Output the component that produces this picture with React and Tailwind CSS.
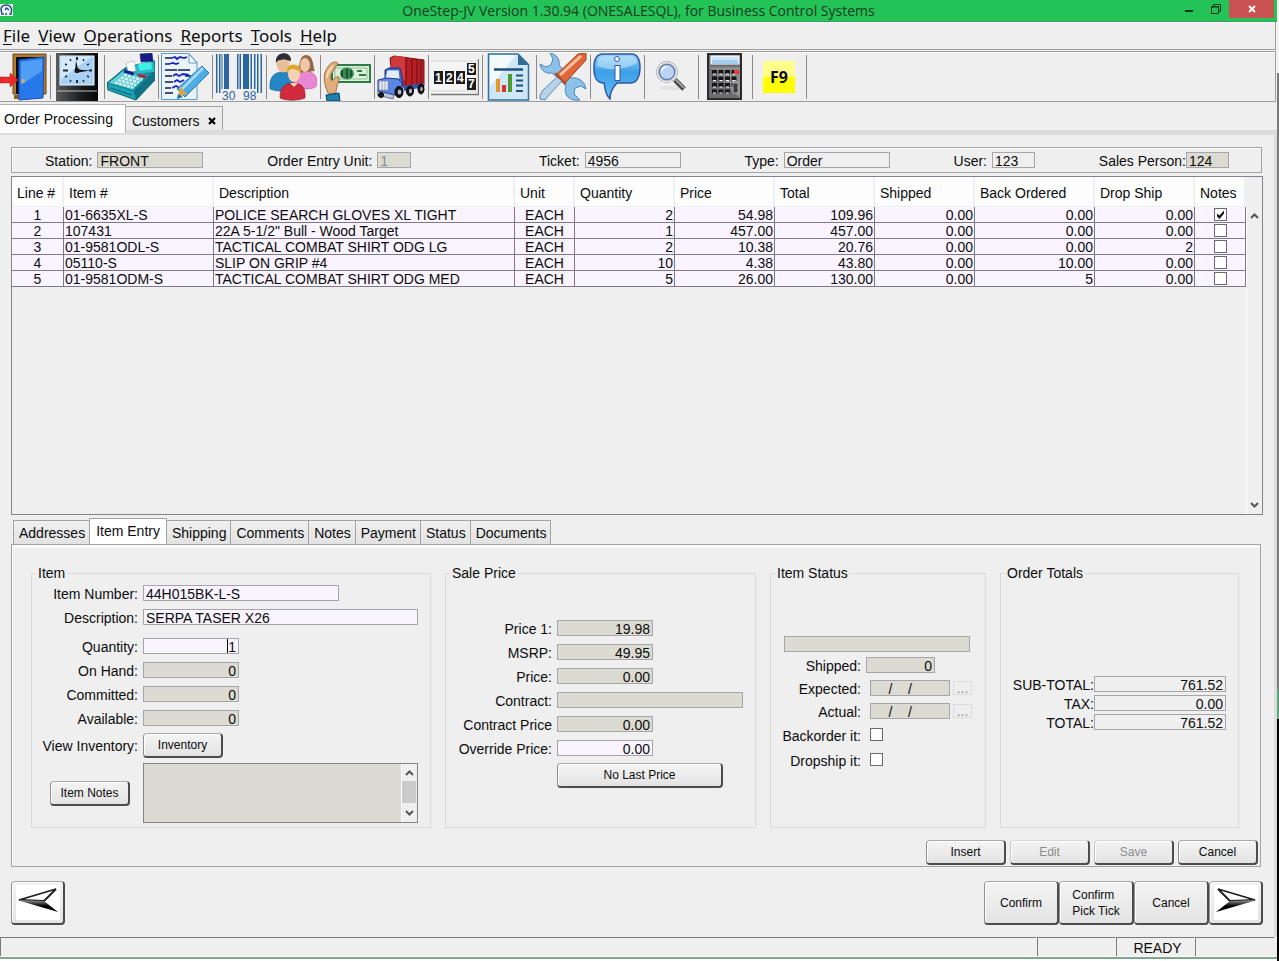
import { useState } from "react";
import { clsx } from "clsx";

const DoorIcon = () => (
  <svg viewBox="0 0 48 48" className="h-12 w-12">
    <path d="M13 1h33v40H13z" fill="#b07c31" stroke="#6b4512" />
    <path d="M16 4h27v37H16z" fill="#0b0b12" />
    <path d="M14 42h6v4h-6z" fill="#8a5d20" />
    <path d="M19 7l25-3-1 41-24 2z" fill="#2878ea" stroke="#1550b8" />
    <path d="M21 9l21-3v12L21 32z" fill="#6bb6fb" opacity=".6" />
    <circle cx="23" cy="28" r="2" fill="#c9b26a" />
    <path d="M0 24h10v-4l8 7-8 7v-4H0z" fill="#ea2b2b" stroke="#b31515" strokeWidth=".5" />
  </svg>
);

const ClockIcon = () => (
  <svg viewBox="0 0 48 48" className="h-12 w-12">
    <defs>
      <linearGradient id="clock-case" x1="0" y1="0" x2="1" y2="0">
        <stop offset="0" stopColor="#5a5b5d" />
        <stop offset=".6" stopColor="#1b1c1d" />
        <stop offset="1" stopColor="#050505" />
      </linearGradient>
    </defs>
    <path d="M3 0h42v48H3z" fill="url(#clock-case)" />
    <path d="M4 38h40" stroke="#b9bcc0" />
    <rect x="7" y="3" width="34" height="29" fill="#a9d1f3" stroke="#eef6fc" />
    <path d="M8 4h30L8 26z" fill="#dff0fc" opacity=".8" />
    <g stroke="#1e2a36" strokeWidth="2">
      <path d="M24 4v3M24 27v3M10 17.500h5M36 17.500h3" />
      <path d="M17 6l1 2M31 6l-1 2M12 11l2 1M36 11l-2 1M12 24l2-1M36 24l-2-1M17 29l1-2M31 29l-1-2" strokeWidth="1.500" />
    </g>
    <path d="M23 7l2 9.500 12 1-12 2h-3z" fill="#111" />
    <circle cx="24" cy="17.500" r="2.500" fill="#111" />
  </svg>
);

const RegisterIcon = () => (
  <svg viewBox="0 0 48 48" className="h-12 w-12">
    <path d="M0 30l18-15 30-7v19L29 47 1 37z" fill="#1595a6" stroke="#0b5f6e" />
    <path d="M1 30l17-14 23 6-15 15z" fill="#62cfd9" stroke="#0e7483" strokeWidth=".7" />
    <path d="M1 31l25 8 3 7-27-9z" fill="#1ba6b7" />
    <path d="M27 38l20-20v10L29 46z" fill="#0f7181" />
    <path d="M28 12l19-4 1 11-19 3z" fill="#2cb8c8" stroke="#0b6a79" strokeWidth=".6" />
    <path d="M31 11l13-2 1 7-12 2z" fill="#3ef0e6" />
    <path d="M33 1l12-1 1 8-12 1z" fill="#151a8c" stroke="#0b0d4d" strokeWidth=".5" />
    <path d="M19 10l8-2 2 10-8 1z" fill="#fff" stroke="#9ab" strokeWidth=".6" />
    <path d="M17 18l10 3" stroke="#17208f" strokeWidth="3" />
    <g stroke="#e3f2ee" strokeWidth="2.200" strokeDasharray="3 1.200">
      <path d="M17 22l18 5M14 24.500l18 5M11 27l18 5M8 29.500l18 5" />
    </g>
    <path d="M31 22l8 2" stroke="#9d2b3d" strokeWidth="3" />
    <path d="M3 35l22 7" stroke="#0a5b69" />
  </svg>
);

const NoteIcon = () => (
  <svg viewBox="0 0 48 48" className="h-12 w-12">
    <path d="M.5.5H28l8 9v37H.500z" fill="#e9f4fd" stroke="#5c9ccb" />
    <path d="M28 1v9h8z" fill="#fff" stroke="#5c9ccb" />
    <g stroke="#111c3c" strokeWidth="1.500">
      <path d="M4 5h7M4 11h4M4 17h12M17 17h12M4 23h7M24 23h6M4 29h8M4 35h6M4 40h8" />
    </g>
    <g stroke="#1720c4" strokeWidth="1.800" fill="none">
      <path d="M11 5l3-1 2 2 3-2 4 1 3-1M8 11l4-1 3 1 3-1M12 23l3-2 3 2 4-2 6 1M13 29l3-2 3 2 4-2M11 35l4-2 4 2 5-1" />
    </g>
    <path d="M41 13l7 7-24 24-8-8z" fill="#4fade6" stroke="#2679b4" />
    <path d="M42 15L19 38" stroke="#a9dbf8" strokeWidth="2.500" />
    <path d="M19 33l7 8-9 3z" fill="#d6a34a" />
    <path d="M17 41l-1 5 6-2z" fill="#1e6fb0" />
  </svg>
);

const BarcodeIcon = () => (
  <svg viewBox="0 0 48 48" className="h-12 w-12 overflow-visible">
    <g fill="#2b66a3">
      <path d="M1 1h1.500v39H1zM4 1h1.500v39H4zM9 1h5v35H9zM6.500 1h1v35h-1z" />
      <path d="M22 1h1.500v35H22zM24.500 1H26v35h-1.500zM28 1h6v35h-6zM35.500 1H37v35h-1.500zM39 1h1.500v35H39zM42 1h1.500v39H42zM45.500 1H47v39h-1.500z" />
    </g>
    <text x="7" y="47" fontSize="12" fill="#2b66a3" fontFamily="Liberation Sans">30</text>
    <text x="28" y="47" fontSize="12" fill="#2b66a3" fontFamily="Liberation Sans">98</text>
  </svg>
);

const PeopleIcon = () => (
  <svg viewBox="0 0 48 48" className="h-12 w-12">
    <path d="M1 36c-1-12 4-17 13-17s13 5 13 17c-8 3-18 3-26 0z" fill="#2287c4" stroke="#155d9b" strokeWidth=".6" />
    <path d="M24 34c0-12 5-16 12-16 8 0 13 5 12 14-2 4-8 4-14 4z" fill="#e987d2" stroke="#b5508f" strokeWidth=".6" />
    <path d="M28 20c3-3 1-18 9-18s7 13 9 16z" fill="#96664a" />
    <ellipse cx="36" cy="12" rx="5" ry="7" fill="#f0c7a4" />
    <ellipse cx="14" cy="11" rx="6.500" ry="8.500" fill="#e9bd98" />
    <path d="M7 10c-2-12 16-13 15-2-4-1-8-2-10-1-3 0-4 1-5 3z" fill="#2c2f35" />
    <path d="M11 45c0-12 6-15 13-15s13 3 12 15c-8 3-18 3-25 0z" fill="#d02a3c" stroke="#8f1523" strokeWidth=".6" />
    <ellipse cx="25" cy="21" rx="6" ry="8" fill="#f4d2b4" />
    <path d="M18 21c-3-12 15-13 14-1-3-3-6-4-9-4-2 0-4 2-5 5z" fill="#e2a52c" />
    <path d="M21 30l4 4 4-4" fill="#f4d2b4" />
  </svg>
);

const CashIcon = () => (
  <svg viewBox="0 0 48 48" className="h-12 w-12">
    <rect x="9" y="12" width="38" height="17" fill="#dcefd9" stroke="#2d7d46" strokeWidth="2" />
    <path d="M12 15h32v11H12z" fill="none" stroke="#7fb58a" strokeWidth=".8" />
    <ellipse cx="24" cy="20.500" rx="7" ry="6" fill="#3b8750" />
    <path d="M24 16v9M19 17v7M28 17v7" stroke="#16482a" strokeWidth="1.500" />
    <path d="M34 18h5M36 22h7" stroke="#2d7d46" strokeWidth="2" />
    <path
      d="M5 40C0 29 0 20 5 14c2-4 5-5 8-5 3 1 2 3 0 4l-5 9c-1 5 0 7 3 4s6-3 5 0c-1 6-3 8-3 15z"
      fill="#dfae7b"
      stroke="#8a5a2c"
      strokeWidth=".8"
    />
    <path d="M4 25c0-5 3-9 6-12" stroke="#f7d9b2" strokeWidth="2" fill="none" />
    <path d="M3 42l13-2 1 8H4z" fill="#1d7fae" stroke="#0c4468" />
  </svg>
);

const TruckIcon = () => (
  <svg viewBox="0 0 48 48" className="h-12 w-12">
    <path d="M13 5l4-2 30 4v26l-18 3-14-12z" fill="#b71f25" stroke="#7a1014" />
    <path d="M14 5l4-2 11 1v24l-15-5z" fill="#d03a3d" />
    <path d="M29 4v30M35 5v29M40 6v28M44 7v26" stroke="#84131a" strokeWidth="1.500" />
    <path d="M8 17l4-2h11l3 15-2 6H8z" fill="#3f6bd0" stroke="#1c2f86" />
    <path d="M10 17h12l1 9H8z" fill="#dfeefb" stroke="#2b469f" strokeWidth=".6" />
    <path d="M1 27l8-2 12 1 4 4v8l-7 4-17-4z" fill="#5b86e2" stroke="#203a99" />
    <path d="M2 28h9v9H2z" fill="#e4e9f2" stroke="#8790a8" strokeWidth=".7" />
    <path d="M5 28v9M8 28v9" stroke="#8790a8" strokeWidth=".7" />
    <path d="M0 38l17 4-1 4-16-4z" fill="#bcc7dc" stroke="#3d4c78" strokeWidth=".7" />
    <path d="M26 33l21-3v4l-20 4z" fill="#3456a8" />
    <g fill="#17181c" stroke="#000">
      <ellipse cx="22" cy="39" rx="4" ry="5.500" />
      <ellipse cx="33" cy="38" rx="3.500" ry="5" />
      <ellipse cx="44" cy="36" rx="3" ry="5" />
      <ellipse cx="4" cy="42" rx="2.500" ry="2.500" />
    </g>
    <g fill="#b9bfcc">
      <ellipse cx="22.500" cy="39" rx="1.800" ry="2.500" />
      <ellipse cx="33.500" cy="38" rx="1.500" ry="2.200" />
      <ellipse cx="44.500" cy="36" rx="1.200" ry="2" />
    </g>
  </svg>
);

const CounterIcon = () => (
  <svg viewBox="0 0 48 48" className="h-12 w-12">
    <rect x="0" y="6" width="48" height="36" fill="#f4f4f4" />
    <path d="M0 41.500h47.500V6" fill="none" stroke="#7a7a7a" strokeWidth="1.500" />
    <path d="M0 38h46M0 8h47" fill="none" stroke="#d2d2d2" />
    <g fill="#1c1c1c">
      <rect x="3" y="18" width="9" height="13" />
      <rect x="14" y="18" width="9" height="13" />
      <rect x="25" y="18" width="9" height="13" />
      <rect x="36" y="10" width="9" height="12" />
      <rect x="36" y="25" width="9" height="12" />
    </g>
    <g fill="#fff" fontSize="12" fontWeight="bold" fontFamily="Liberation Sans">
      <text x="4" y="29">1</text>
      <text x="15" y="29">2</text>
      <text x="26" y="29">4</text>
      <text x="37" y="20">5</text>
      <text x="37" y="35">7</text>
    </g>
  </svg>
);

const ReportIcon = () => (
  <svg viewBox="0 0 48 48" className="h-12 w-12">
    <path d="M3.500 1H33l10.500 10.500V47h-40z" fill="#cfe6f7" stroke="#33709c" strokeWidth="1.500" />
    <path d="M5 2h26L5 34z" fill="#f3fafe" />
    <path d="M33 1v11h10.500z" fill="#2f6c96" />
    <path d="M9 16.500h29" stroke="#1e5077" strokeWidth="2.500" />
    <rect x="11" y="26" width="4" height="13" fill="#e3962b" />
    <rect x="17" y="32" width="4" height="7" fill="#dc3030" />
    <rect x="23" y="21" width="4" height="18" fill="#4b9a2b" />
    <path d="M31 22.500h7M31 27.500h7M31 32.500h7M31 38h7" stroke="#1e5077" strokeWidth="2" />
  </svg>
);

const ToolsIcon = () => (
  <svg viewBox="0 0 48 48" className="h-12 w-12">
    <path
      d="M11 0c6 1 10 6 9 12l12 13c8-1 14 4 15 11l-5-3-6 2-1 6 6 6c-6 1-12-1-14-6-1-3-1-6 0-8L13 20c-6 1-11-2-12-9l6 3 5-2 2-6z"
      fill="#8cc1ea"
      stroke="#4a87b9"
    />
    <path d="M1 42l3-5 14-13 5 4L10 42l-4 5-5-1z" fill="#b5d2e9" stroke="#5f8cb2" />
    <path d="M17 22L39 1l8-1v7L26 30z" fill="#e0673a" stroke="#a33c18" />
    <path d="M21 22L42 3" stroke="#f9c1a2" strokeWidth="3" />
    <path d="M16 20l11 11" stroke="#b4481f" strokeWidth="2" />
  </svg>
);

const InfoIcon = () => (
  <svg viewBox="0 0 48 48" className="h-12 w-12">
    <defs>
      <linearGradient id="bubble" x1="0" y1="0" x2="0" y2="1">
        <stop offset="0" stopColor="#9ad5f8" />
        <stop offset=".4" stopColor="#3c9fe6" />
        <stop offset="1" stopColor="#63bff2" />
      </linearGradient>
    </defs>
    <path
      d="M10 1h28c7 0 9 6 9 14s-3 15-9 15H24c-3 3-7 9-7 16-4-3-5-9-6-16C3 30 1 24 1 15 1 7 3 1 10 1z"
      fill="url(#bubble)"
      stroke="#2c56a8"
      strokeWidth="1.500"
    />
    <path d="M4 13C4 6 7 3 12 3h24c5 0 8 3 8 7-13 7-27 8-40 3z" fill="#c8eafc" opacity=".55" />
    <circle cx="24" cy="6" r="2.500" fill="#fff" stroke="#3652a4" />
    <rect x="22" y="12.500" width="5" height="15" fill="#fff" stroke="#3652a4" />
  </svg>
);

const SearchIcon = () => (
  <svg viewBox="0 0 48 48" className="h-12 w-12">
    <ellipse cx="24" cy="35" rx="12" ry="2" fill="#e2e2e2" />
    <path d="M28 27l9 9" stroke="#4b4b4b" strokeWidth="5" />
    <path d="M29 27l8 8" stroke="#bdbdbd" strokeWidth="1.500" />
    <circle cx="20" cy="19" r="9" fill="#cfe0f6" stroke="#8f949c" strokeWidth="3.500" />
    <circle cx="20" cy="19" r="9.500" fill="none" stroke="#eceef2" strokeWidth="1.500" />
    <circle cx="20" cy="19" r="7.500" fill="#bcd3f3" stroke="#5277bd" />
    <path d="M14 19c0-5 5-7 8-5-4 0-6 2-8 5z" fill="#fff" />
  </svg>
);

const CalculatorIcon = () => (
  <svg viewBox="0 0 48 48" className="h-12 w-12">
    <rect x="7" y="1" width="33" height="45" fill="#6d6d70" stroke="#2c2c2e" strokeWidth="2" />
    <path d="M8 14h31v31z" fill="#8d8d90" />
    <rect x="10" y="3" width="28" height="8" fill="#cfe6fa" stroke="#fff" />
    <path d="M11 7h26v4H11z" fill="#a5cdee" />
    <g stroke="#151516" strokeWidth="4" strokeDasharray="5 1.500">
      <path d="M11 19h25M11 25.500h25M11 32h25M11 38.500h19" />
    </g>
    <g stroke="#fff" strokeWidth="1" strokeDasharray="3 3.500">
      <path d="M12 21h23M12 27.500h23M12 34h23M12 40h18" />
    </g>
    <rect x="33" y="17" width="5" height="4" fill="#e23b3b" />
    <rect x="32" y="30" width="5" height="10" fill="#3a3a3d" stroke="#cfcfcf" strokeWidth=".7" />
  </svg>
);

const F9Icon = () => (
  <span className="ml-2 flex h-8 w-8 items-center justify-center bg-linear-to-b from-[#ffff8a] from-50% to-[#ffff00] to-50% font-['Noto_Sans',sans-serif] text-base font-bold">
    F9
  </span>
);

const tools = [
  { name: "Clock", icon: ClockIcon },
  { name: "Register", icon: RegisterIcon },
  { name: "Notes", icon: NoteIcon },
  { name: "Barcode", icon: BarcodeIcon },
  { name: "Customers", icon: PeopleIcon },
  { name: "Payments", icon: CashIcon },
  { name: "Shipping", icon: TruckIcon },
  { name: "Counter", icon: CounterIcon },
  { name: "Reports", icon: ReportIcon },
  { name: "Tools", icon: ToolsIcon },
  { name: "Info", icon: InfoIcon },
  { name: "Search", icon: SearchIcon },
  { name: "Calculator", icon: CalculatorIcon },
  { name: "F9", icon: F9Icon },
];

const menus = ["File", "View", "Operations", "Reports", "Tools", "Help"];

const columns = [
  { title: "Line #", width: "w-[52px]" },
  { title: "Item #", width: "w-[150px]" },
  { title: "Description", width: "" },
  { title: "Unit", width: "w-[60px]" },
  { title: "Quantity", width: "w-[100px]" },
  { title: "Price", width: "w-[100px]" },
  { title: "Total", width: "w-[100px]" },
  { title: "Shipped", width: "w-[100px]" },
  { title: "Back Ordered", width: "w-[120px]" },
  { title: "Drop Ship", width: "w-[100px]" },
  { title: "Notes", width: "w-[51px]" },
];

const lines = [
  ["1", "01-6635XL-S", "POLICE SEARCH GLOVES XL TIGHT", "EACH", "2", "54.98", "109.96", "0.00", "0.00", "0.00"],
  ["2", "107431", "22A 5-1/2\" Bull - Wood Target", "EACH", "1", "457.00", "457.00", "0.00", "0.00", "0.00"],
  ["3", "01-9581ODL-S", "TACTICAL COMBAT SHIRT ODG LG", "EACH", "2", "10.38", "20.76", "0.00", "0.00", "2"],
  ["4", "05110-S", "SLIP ON GRIP #4", "EACH", "10", "4.38", "43.80", "0.00", "10.00", "0.00"],
  ["5", "01-9581ODM-S", "TACTICAL COMBAT SHIRT ODG MED", "EACH", "5", "26.00", "130.00", "0.00", "5", "0.00"],
];

const cellAlign = (i) => {
  if (i === 0 || i === 3) return "text-center";
  return i > 3 ? "text-right pr-px" : "text-left pl-px";
};

const orderTabs = ["Addresses", "Item Entry", "Shipping", "Comments", "Notes", "Payment", "Status", "Documents"];

function Field({ id, tone = "locked", className, ...rest }) {
  return (
    <input
      id={id}
      type="text"
      className={clsx(
        "h-4 border border-[#a6a6aa] px-[2px] pt-[2px] text-sm leading-none outline-none",
        tone === "locked" && "bg-[#dbdbd1]",
        tone === "open" && "bg-[#f9f4ff]",
        tone === "plain" && "bg-[#efefef]",
        className
      )}
      {...rest}
    />
  );
}

function Check({ checked, onChange, ...rest }) {
  return (
    <span className="relative block h-[13px] w-[13px]">
      <input
        type="checkbox"
        checked={checked}
        onChange={onChange}
        className="block h-[13px] w-[13px] appearance-none border border-[#6a6a6a] bg-white"
        {...rest}
      />
      {checked && (
        <svg viewBox="0 0 13 13" className="pointer-events-none absolute inset-0">
          <path d="M3 5.500v3L5.500 11 10 5.500v-3L5.500 7.500z" fill="#111" />
        </svg>
      )}
    </span>
  );
}

function Button({ className, ...rest }) {
  return (
    <button
      type="button"
      className={clsx(
        "rounded border border-r-2 border-b-2 border-t-[#a9a9a9] border-r-[#4c4c4c] border-b-[#4c4c4c] border-l-[#8f8f8f] bg-linear-to-b from-[#f4f4f4] to-[#e3e3e3] text-xs leading-4 shadow-[inset_1px_1px_0_#fff] disabled:border-t-[#d6d6d6] disabled:border-l-[#c4c4c4] disabled:text-[#8c8c8c]",
        className
      )}
      {...rest}
    />
  );
}

function Row({ id, label, labelWidth, gap = "gap-[5px]", height = "h-6", children }) {
  return (
    <div className={clsx("flex items-center", height, gap)}>
      <label htmlFor={id} className={clsx("shrink-0 pt-[2px] text-right whitespace-nowrap", labelWidth)}>
        {label}
      </label>
      {children}
    </div>
  );
}

function Group({ title, className, children }) {
  return (
    <fieldset className={clsx("h-[263px] min-w-0 border border-[#dadada]", className)}>
      <legend className="ml-1 px-[2px] leading-4">{title}</legend>
      {children}
    </fieldset>
  );
}

const Chevron = ({ down }) => (
  <svg viewBox="0 0 9 7" className="h-[7px] w-[9px]">
    <path d={down ? "M1 1l3.500 3.500L8 1" : "M1 6l3.500-3.500L8 6"} fill="none" stroke="#565656" strokeWidth="2" />
  </svg>
);

function ScrollBar({ thumb, className }) {
  return (
    <div className={clsx("flex w-4 shrink-0 flex-col items-center border-l border-white bg-[#efefef]", className)}>
      <button type="button" aria-label="Scroll up" className="flex h-[17px] w-full items-center justify-center">
        <Chevron />
      </button>
      <div className="w-full flex-1">{thumb && <div className="mr-px h-[22px] bg-[#cbcbcb]" />}</div>
      <button type="button" aria-label="Scroll down" className="flex h-[17px] w-full items-center justify-center">
        <Chevron down />
      </button>
    </div>
  );
}

const Arrow = ({ flip }) => (
  <span className="flex h-[35px] w-11 justify-center bg-white pt-[2px]">
    <svg viewBox="0 0 42 26" className={clsx("h-[26px] w-[42px]", flip && "-scale-x-100")}>
      <defs>
        <linearGradient id="dart" x1="0" y1="0" x2="0" y2="1">
          <stop offset="0" stopColor="#999" />
          <stop offset=".5" stopColor="#000" />
        </linearGradient>
      </defs>
      <path d="M2 13L39 2 27 14z" fill="#fff" stroke="#1c1c1c" strokeWidth="1.800" />
      <path d="M0 13l27 1 14 11z" fill="url(#dart)" />
    </svg>
  </span>
);

function TitleBar() {
  return (
    <header className="relative flex h-[22px] items-start justify-end border-b border-[#3f9e5f] bg-[#24c357]">
      <svg viewBox="0 0 13 12" className="absolute top-1 left-0 h-3 w-[13px] bg-[#f3faff]">
        <path d="M2 9C-1 2 4 1 6.500 1S13 3 11 9M5 6l1.500-2L9 6" fill="none" stroke="#1d4f86" strokeWidth="1.500" />
        <path d="M1 10h3M9 10h3M5 10h2" stroke="#1d4f86" strokeWidth="1.500" />
      </svg>
      <h1 className="absolute inset-x-0 text-center font-['Open_Sans',sans-serif] text-sm leading-[22px] text-[#173b22]">
        OneStep-JV Version 1.30.94 (ONESALESQL), for Business Control Systems
      </h1>
      <div className="relative mr-[3px] flex">
        <button type="button" aria-label="Minimize" className="flex h-[18px] w-[26px] items-center justify-center">
          <svg viewBox="0 0 10 10" className="h-[10px] w-[10px]">
            <path d="M1 7h8" stroke="#12351d" strokeWidth="2" />
          </svg>
        </button>
        <button type="button" aria-label="Restore" className="flex h-[18px] w-[27px] items-center justify-center">
          <svg viewBox="0 0 10 10" className="h-[10px] w-[10px]" fill="none" stroke="#12351d">
            <path d="M.5 2.500h7v7h-7zM2.500 2.500v-2h7v7h-2M.5 3h7" />
          </svg>
        </button>
        <button type="button" aria-label="Close" className="flex h-[18px] w-[45px] items-center justify-center bg-[#cb5252]">
          <svg viewBox="0 0 8 8" className="h-2 w-2">
            <path d="M1 1l6 6M7 1L1 7" stroke="#fff" strokeWidth="1.800" />
          </svg>
        </button>
      </div>
    </header>
  );
}

function Toolbar() {
  return (
    <div className="mt-px mr-px flex h-[51px] items-center border border-l-0 border-[#9e9e9e] shadow-[inset_0_1px_0_#fff]">
      <button type="button" aria-label="Exit" className="flex h-11 w-[51px] items-center border-r border-[#8a8a8a]">
        <DoorIcon />
      </button>
      {tools.map(({ name, icon: Icon }) => (
        <button
          key={name}
          type="button"
          aria-label={name}
          className="flex h-11 w-[54px] shrink-0 items-center border-r border-[#8a8a8a] pl-[2px]"
        >
          <Icon />
        </button>
      ))}
    </div>
  );
}

function OrderHeader() {
  return (
    <div className="mr-px flex h-[26px] items-center justify-between border border-[#a3a3a3] pr-8 pl-[33px] shadow-[inset_1px_1px_0_#fff]">
      <Row id="station" label="Station:">
        <Field id="station" defaultValue="FRONT" className="w-[106px]" />
      </Row>
      <Row id="unit" label="Order Entry Unit:">
        <Field id="unit" defaultValue="1" className="w-[34px] text-[#8a8a8a]" />
      </Row>
      <span />
      <Row id="ticket" label="Ticket:">
        <Field id="ticket" tone="plain" defaultValue="4956" className="w-24" />
      </Row>
      <Row id="type" label="Type:">
        <Field id="type" tone="plain" defaultValue="Order" className="w-[106px]" />
      </Row>
      <Row id="user" label="User:">
        <Field id="user" tone="plain" defaultValue="123" className="w-[43px]" />
      </Row>
      <Row id="sales" label="Sales Person:" gap="gap-0">
        <Field id="sales" defaultValue="124" className="w-[43px]" />
      </Row>
    </div>
  );
}

function LinesTable() {
  const [notes, setNotes] = useState([true, false, false, false, false]);
  const toggle = (i) => setNotes(notes.map((n, j) => (j === i ? !n : n)));

  return (
    <div className="mt-[3px] flex h-[339px] border border-[#83838b]">
      <div className="min-w-0 flex-1">
        <table className="w-full table-fixed border-separate border-spacing-0">
          <thead>
            <tr className="h-[30px] bg-[#fdfdfd]">
              {columns.map((c) => (
                <th
                  key={c.title}
                  scope="col"
                  className={clsx(
                    "border-r-2 border-b border-[#eef1f4] pt-[2px] pl-[5px] text-left font-normal whitespace-nowrap",
                    c.width
                  )}
                >
                  {c.title}
                </th>
              ))}
            </tr>
          </thead>
          <tbody>
            {lines.map((line, row) => (
              <tr key={line[0]} className="h-4 bg-[#f9f4ff] leading-[13px]">
                {line.map((cell, i) => (
                  <td
                    key={i}
                    className={clsx("border-r border-b border-[#7d7a85] pt-[2px] whitespace-nowrap", cellAlign(i))}
                  >
                    {cell}
                  </td>
                ))}
                <td className="border-r border-b border-[#7d7a85]">
                  <div className="flex justify-center">
                    <Check checked={notes[row]} onChange={() => toggle(row)} aria-label={`Notes for line ${line[0]}`} />
                  </div>
                </td>
              </tr>
            ))}
          </tbody>
        </table>
      </div>
      <ScrollBar className="mt-[30px]" />
    </div>
  );
}

function ItemGroup() {
  return (
    <Group title="Item">
      <Row id="item-number" label="Item Number:" labelWidth="w-[106px]">
        <Field id="item-number" tone="open" defaultValue="44H015BK-L-S" className="w-[196px]" />
      </Row>
      <Row id="item-desc" label="Description:" labelWidth="w-[106px]">
        <Field id="item-desc" tone="open" defaultValue="SERPA TASER X26" className="w-[275px]" />
      </Row>
      <div className="mt-[5px]">
        <Row id="qty" label="Quantity:" labelWidth="w-[106px]">
          <span className="relative flex">
            <Field id="qty" tone="open" defaultValue="1" className="w-24 text-right" />
            <span className="absolute top-px right-[11px] h-[14px] w-px bg-black" />
          </span>
        </Row>
        <Row id="on-hand" label="On Hand:" labelWidth="w-[106px]">
          <Field id="on-hand" defaultValue="0" className="w-24 text-right" />
        </Row>
        <Row id="committed" label="Committed:" labelWidth="w-[106px]">
          <Field id="committed" defaultValue="0" className="w-24 text-right" />
        </Row>
        <Row id="available" label="Available:" labelWidth="w-[106px]">
          <Field id="available" defaultValue="0" className="w-24 text-right" />
        </Row>
      </div>
      <Row id="inventory" label="View Inventory:" labelWidth="w-[106px]" height="h-[30px]">
        <Button id="inventory" className="h-[25px] w-20">Inventory</Button>
      </Row>
      <div className="mt-[3px] flex items-center gap-[13px] pl-[18px]">
        <Button className="h-[25px] w-20 shrink-0">Item Notes</Button>
        <div className="flex h-[60px] w-[275px] border border-[#83838b] bg-[#dbdbd1]">
          <textarea aria-label="Item notes" className="min-w-0 flex-1 resize-none outline-none" />
          <ScrollBar thumb />
        </div>
      </div>
    </Group>
  );
}

function PriceGroup() {
  const prices = [
    { id: "price1", label: "Price 1:", value: "19.98" },
    { id: "msrp", label: "MSRP:", value: "49.95" },
    { id: "price", label: "Price:", value: "0.00" },
    { id: "contract", label: "Contract:", value: "" },
    { id: "contract-price", label: "Contract Price", value: "0.00" },
    { id: "override", label: "Override Price:", value: "0.00" },
  ];
  return (
    <Group title="Sale Price">
      <div className="pt-[35px]">
        {prices.map((p) => (
          <Row key={p.id} id={p.id} label={p.label} labelWidth="w-[106px]">
            <Field
              id={p.id}
              defaultValue={p.value}
              tone={p.id === "override" ? "open" : "locked"}
              className={clsx("text-right", p.id === "contract" ? "w-[186px]" : "w-24")}
            />
          </Row>
        ))}
      </div>
      <Button className="mt-[3px] ml-[111px] h-[25px] w-[166px]">No Last Price</Button>
    </Group>
  );
}

function StatusGroup() {
  const [flags, setFlags] = useState({ backorder: false, dropship: false });
  const dates = [
    { id: "expected", label: "Expected:" },
    { id: "actual", label: "Actual:" },
  ];
  return (
    <Group title="Item Status">
      <div className="flex pt-[55px] pl-[13px]">
        <Field aria-label="Item status" defaultValue="" className="w-[186px]" />
      </div>
      <div className="pt-[2px]">
        <Row id="shipped" label="Shipped:" labelWidth="w-[90px]" height="h-[22px]">
          <Field id="shipped" defaultValue="0" className="w-[69px] text-right" />
        </Row>
        {dates.map((d) => (
          <Row key={d.id} id={d.id} label={d.label} labelWidth="w-[90px]" gap="gap-[9px]" height="h-[23px]">
            <div className="flex items-center gap-[3px]">
              <Field id={d.id} defaultValue="    /    /" className="w-20" />
              <button
                type="button"
                disabled
                aria-label={`Pick ${d.label}`}
                className="flex h-[14px] w-[19px] items-center justify-center border border-[#dadada] text-sm leading-none text-[#8c8c8c]"
              >
                ...
              </button>
            </div>
          </Row>
        ))}
        <Row id="backorder" label="Backorder it:" labelWidth="w-[90px]" gap="gap-[9px]" height="h-[25px]">
          <Check
            id="backorder"
            checked={flags.backorder}
            onChange={() => setFlags({ ...flags, backorder: !flags.backorder })}
          />
        </Row>
        <Row id="dropship" label="Dropship it:" labelWidth="w-[90px]" gap="gap-[9px]" height="h-[25px]">
          <Check
            id="dropship"
            checked={flags.dropship}
            onChange={() => setFlags({ ...flags, dropship: !flags.dropship })}
          />
        </Row>
      </div>
    </Group>
  );
}

function TotalsGroup() {
  const totals = [
    { id: "subtotal", label: "SUB-TOTAL:", value: "761.52" },
    { id: "tax", label: "TAX:", value: "0.00" },
    { id: "total", label: "TOTAL:", value: "761.52" },
  ];
  return (
    <Group title="Order Totals">
      <div className="pt-[93px]">
        {totals.map((t) => (
          <Row key={t.id} id={t.id} label={t.label} labelWidth="w-[93px]" gap="gap-0" height="h-[19px]">
            <Field id={t.id} tone="plain" defaultValue={t.value} className="w-[132px] text-right" />
          </Row>
        ))}
      </div>
    </Group>
  );
}

function OrderPanel() {
  const [active, setActive] = useState("Item Entry");
  return (
    <section className="mt-[3px] mr-[2px]">
      <div className="flex items-end pl-[2px]">
        {orderTabs.map((tab) => (
          <button
            key={tab}
            type="button"
            onClick={() => setActive(tab)}
            className={clsx(
              "-mr-px border border-b-0 border-[#a3a3a3] whitespace-nowrap",
              tab === active
                ? "h-[26px] bg-white px-[6px] pb-[2px]"
                : "h-6 bg-linear-to-b from-[#f0f0f0] to-[#e2e2e2] pr-1 pl-[5px]"
            )}
          >
            {tab}
          </button>
        ))}
      </div>
      <div className="border border-[#a3a3a3] pt-5 pr-[21px] pl-[19px] shadow-[inset_1px_3px_0_#fafafa]">
        <div className="grid grid-cols-[400fr_311fr_216fr_239fr] gap-[14px]">
          <ItemGroup />
          <PriceGroup />
          <StatusGroup />
          <TotalsGroup />
        </div>
        <div className="mt-3 -mr-[19px] mb-px flex justify-end gap-1">
          <Button className="h-[25px] w-20">Insert</Button>
          <Button className="h-[25px] w-20" disabled>Edit</Button>
          <Button className="h-[25px] w-20" disabled>Save</Button>
          <Button className="h-[25px] w-20">Cancel</Button>
        </div>
      </div>
    </section>
  );
}

export default function App() {
  return (
    <div className="flex min-h-screen bg-[#efefef] font-['Liberation_Sans',Arial,sans-serif] text-sm text-[#0c0c0c]">
      <div className="flex min-w-0 flex-1 flex-col">
        <TitleBar />
        <nav className="mr-px flex h-7 items-center gap-2 border-r border-b border-[#9e9e9e] pl-[3px] font-['Noto_Sans',sans-serif] text-[17px] shadow-[inset_0_1px_0_#fff]">
          {menus.map((m) => (
            <button key={m} type="button" className="leading-6">
              <span className="underline underline-offset-2">{m[0]}</span>
              {m.slice(1)}
            </button>
          ))}
        </nav>
        <Toolbar />

        {/* Open windows */}
        <div className="mt-[2px] flex h-[26px] items-end">
          <button type="button" className="relative -mb-[3px] h-[29px] border border-b-0 border-l-0 border-[#b3b3b3] bg-white pr-3 pl-1">
            Order Processing
          </button>
          <button type="button" className="flex h-6 items-center gap-2 border border-b-0 border-l-0 border-[#a3a3a3] bg-[#ececec] pt-1 pr-1 pl-[6px]">
            Customers
            <svg viewBox="0 0 8 8" className="mr-[2px] h-2 w-2">
              <path d="M1 1l6 6M7 1L1 7" stroke="#000" strokeWidth="2.200" />
            </svg>
          </button>
        </div>
        <main className="border-t-[5px] border-r-[3px] border-[#dcdcdc] pt-3 pr-[11px] pl-[11px]">
          <OrderHeader />
          <LinesTable />
          <OrderPanel />
          <div className="mt-[14px] mb-3 flex">
            <Button aria-label="Previous" className="flex h-11 w-[54px] items-center justify-center">
              <Arrow />
            </Button>
            <div className="ml-auto flex">
              <Button className="h-11 w-[75px]">Confirm</Button>
              <Button className="h-11 w-[75px]">
                <span className="inline-block text-left">
                  Confirm
                  <br />
                  Pick Tick
                </span>
              </Button>
              <Button className="h-11 w-[75px]">Cancel</Button>
              <Button aria-label="Next" className="flex h-11 w-[54px] items-center justify-center">
                <Arrow flip />
              </Button>
            </div>
          </div>
        </main>

        <footer className="mr-[3px] flex h-5 gap-px border-b border-white">
          <div className="flex-1 border-t border-l border-[#7c7c7c]" />
          <div className="w-[78px] border-t border-l border-[#7c7c7c]" />
          <div className="w-[78px] border-t border-l border-[#7c7c7c] pl-1 text-center leading-5">READY</div>
          <div className="w-[79px] border-t border-l border-[#7c7c7c]" />
        </footer>
        <div className="h-[2px] bg-[#7fa58c]" />
        <div className="flex-1 bg-white" />
      </div>

      {/* Desktop visible past the window edge */}
      <div className="flex w-[2px] flex-col">
        <div className="h-[73px] bg-[#f4f4f4]" />
        <div className="h-[616px] bg-[#7a7a7a]" />
        <div className="h-[30px] bg-[#5fa57c]" />
        <div className="flex-1 bg-black" />
      </div>
    </div>
  );
}
